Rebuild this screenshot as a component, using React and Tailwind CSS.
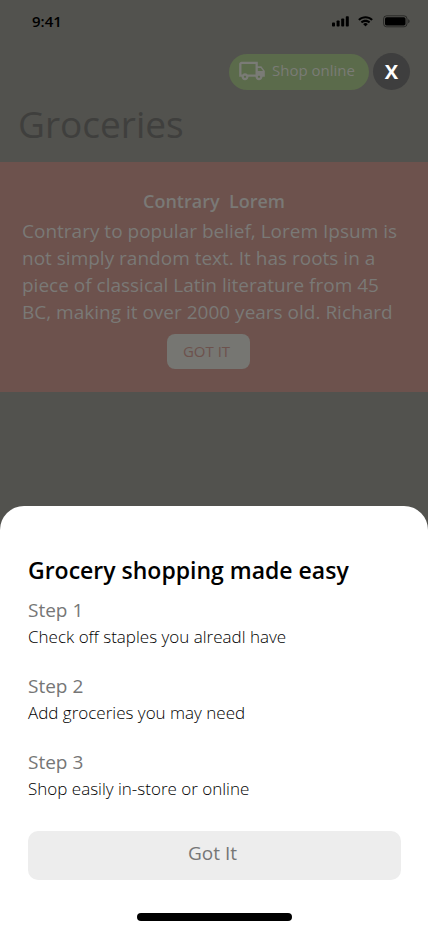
import { MdOutlineLocalShipping } from "react-icons/md";

const steps = [
  { title: "Step 1", text: "Check off staples you alreadl have" },
  { title: "Step 2", text: "Add groceries you may need" },
  { title: "Step 3", text: "Shop easily in-store or online" },
];

function StatusBar() {
  return (
    <div className="flex h-10 items-center justify-between pr-[18px] pl-8 pt-0.5 text-black">
      <span className="text-[15px] font-semibold">9:41</span>
      <div className="flex items-center">
        <svg width="17" height="11" viewBox="0 0 17 11" fill="currentColor" aria-hidden="true">
          <rect x="0" y="6.5" width="3" height="4" rx="0.8" />
          <rect x="4.6" y="4.5" width="3" height="6" rx="0.8" />
          <rect x="9.2" y="2.5" width="3" height="8" rx="0.8" />
          <rect x="13.8" y="0.3" width="3" height="10.2" rx="0.8" />
        </svg>
        <svg className="ml-[9px]" width="15" height="11" viewBox="0 0 15 11" fill="currentColor" aria-hidden="true">
          <path d="M7.5 2.3c2.1 0 4.1.8 5.6 2.2.1.1.3.1.4 0l1.1-1.1c.1-.1.1-.3 0-.4-4-3.8-10.2-3.8-14.2 0-.1.1-.1.3 0 .4l1.1 1.1c.1.1.3.1.4 0C3.4 3.1 5.4 2.3 7.5 2.3z" />
          <path d="M7.5 5.9c1.2 0 2.3.4 3.1 1.2.1.1.3.1.4 0l1.1-1.1c.1-.1.1-.3 0-.4-2.6-2.4-6.6-2.4-9.2 0-.1.1-.1.3 0 .4L4 7.1c.1.1.3.1.4 0 .8-.8 1.9-1.2 3.1-1.2z" />
          <path d="M9.7 8.3c.1-.1.1-.3 0-.4-1.3-1.1-3.1-1.1-4.4 0-.1.1-.1.3 0 .4l2 2c.1.1.3.1.4 0z" />
        </svg>
        <svg className="ml-[10px]" width="27" height="13" viewBox="0 0 27 13" aria-hidden="true">
          <rect x="0.6" y="0.8" width="23.4" height="11" rx="3" fill="none" stroke="#000" strokeOpacity="0.5" />
          <rect x="2" y="2.2" width="20.5" height="8.2" rx="1.6" fill="#000" />
          <path d="M25.2 4.3v4c.8-.3 1.4-1.1 1.4-2s-.6-1.7-1.4-2z" fill="#000" fillOpacity="0.5" />
        </svg>
      </div>
    </div>
  );
}

export default function App() {
  return (
    <div className="flex min-h-screen flex-col bg-[#52524e] font-['Open_Sans','Noto_Sans',sans-serif]">
      <StatusBar />

      <header className="pt-[13px]">
        <div className="flex items-center justify-end gap-1 pr-[18px]">
          <button type="button" className="flex h-9 items-center rounded-full bg-[#5b6b4b] pr-[14px] pb-0.5 pl-[9px] text-[15px] text-[#7a7b76]">
            <MdOutlineLocalShipping size={28} aria-hidden="true" />
            <span className="pl-1.5">Shop online</span>
          </button>
          <button type="button" aria-label="Close" className="flex size-[37px] items-center justify-center rounded-full bg-[#3e3e3e] text-xl font-bold text-white">
            X
          </button>
        </div>
        <h1 className="mt-2 px-[18px] text-[37px] leading-[52px] text-[#3f3f3d]">Groceries</h1>
      </header>

      <section className="mt-3 flex flex-col items-center bg-[#6d524d] px-[22px] pt-[26px] pb-[23px] text-[#7a7976]">
        <h2 className="text-lg leading-[27px] font-semibold whitespace-pre">Contrary  Lorem</h2>
        <p className="mt-[3px] w-full text-[19px] leading-[27px]">
          Contrary to popular belief, Lorem Ipsum is not simply random text. It has roots in a piece of classical
          Latin literature from 45 BC, making it over 2000 years old. Richard
        </p>
        <button type="button" className="mt-2 mr-[11px] h-[35px] rounded-lg bg-[#767672] pr-5 pl-4 text-[15px] text-[#6d524d]">
          GOT IT
        </button>
      </section>

      <main className="mt-auto rounded-t-[24px] bg-white pt-12 pr-[27px] pl-7">
        <h2 className="text-[23px] leading-8 font-semibold text-black">Grocery shopping made easy</h2>
        <ol className="mt-[11px] flex flex-col gap-[23px]">
          {steps.map((step) => (
            <li key={step.title}>
              <h3 className="text-[19px] leading-[27px] text-[#767676]">{step.title}</h3>
              <p className="text-[17px] leading-[26px] font-light text-black">{step.text}</p>
            </li>
          ))}
        </ol>
        <button type="button" className="mt-[29px] h-[49px] w-full rounded-[10px] bg-[#ededed] pr-1 pb-1 text-[19px] text-[#767676]">
          Got It
        </button>
        <div className="mx-auto mt-[33px] mb-[5px] h-2 w-[155px] rounded-full bg-black" />
      </main>
    </div>
  );
}
